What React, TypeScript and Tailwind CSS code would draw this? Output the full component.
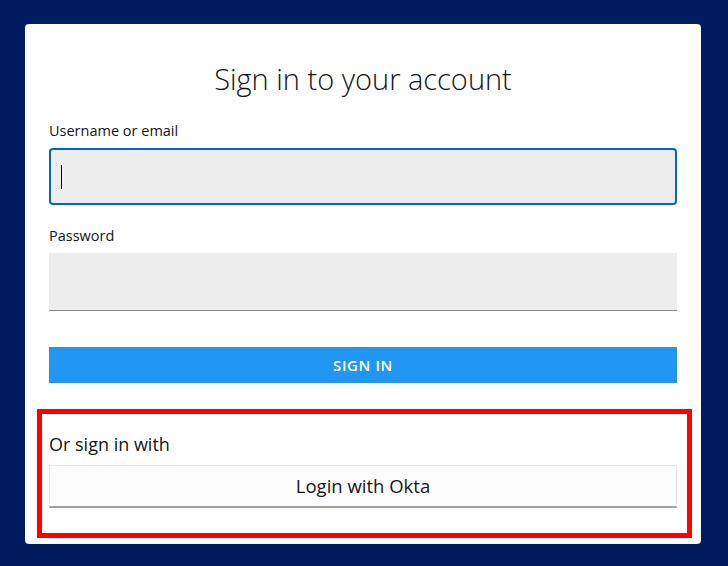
import React from "react";

// ======= Campo de texto =======
const Field = ({ label, focused }: { label: string; focused?: boolean }) => {
  return (
    <div className="flex flex-col">
      <label className="text-[14.5px] leading-[20px] text-[#151515] mb-[7px]">{label}</label>
      {focused ? (
        <div className="h-[57px] rounded-[4px] border-2 border-[#0066cc] bg-[#ededed] flex items-center pl-[10px]">
          <span className="block w-px h-[24px] bg-black" />
        </div>
      ) : (
        <div className="h-[58px] bg-[#ededed] border-b border-[#8a8d90]" />
      )}
    </div>
  );
};

const App = () => {
  return (
    <div
      className="w-[728px] h-[566px] bg-[#001a5e] pt-[24px] pl-[25px] pr-[27px] pb-[22px]"
      style={{ fontFamily: '"Open Sans", "Liberation Sans", sans-serif' }}
    >
      <div className="h-full bg-white rounded-[4px] px-[24px] pt-[35px] flex flex-col">
        <h1 className="text-center text-[29px] leading-[40px] font-light text-[#151515]">
          Sign in to your account
        </h1>

        <div className="mt-[22px] flex flex-col gap-[21px]">
          <Field label="Username or email" focused />
          <Field label="Password" />
        </div>

        <button className="mt-[36px] h-[36px] w-full bg-[#2196f3] text-white text-[15px] tracking-[0.6px] font-semibold">
          SIGN IN
        </button>

        {/* Bloco destacado */}
        <div className="mt-[26px] -ml-[12px] -mr-[15px] border-[5px] border-[#ff0000] pl-[7px] pr-[10px] pt-[17px] pb-[25px]">
          <p className="text-[18px] leading-[26px] text-[#151515]">Or sign in with</p>
          <button className="mt-[8px] w-full h-[43px] bg-[#fdfdfd] border border-[#e6e6e6] border-b-2 border-b-[#a0a0a0] text-[18.5px] font-medium text-[#151515]">
            Login with Okta
          </button>
        </div>
      </div>
    </div>
  );
};

export default App;
